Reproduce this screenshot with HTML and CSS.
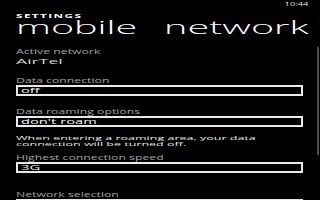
FILE: index.html
```html
<!DOCTYPE html>
<html>
<head>
<meta charset="utf-8">
<link rel="stylesheet" href="styles.css">
</head>
<body>
<div class="screen">
  <div class="status"><span class="time">10:44</span></div>
  <div class="header">
    <div class="app-title">SETTINGS</div>
    <div class="page-title">mobile network</div>
  </div>
  <div class="content">
    <div class="field f-active">
      <div class="label">Active network</div>
      <div class="value">AirTel</div>
    </div>
    <div class="field f-data">
      <div class="label">Data connection</div>
      <div class="picker"><span class="pick-text">off</span></div>
    </div>
    <div class="field f-roam">
      <div class="label">Data roaming options</div>
      <div class="picker"><span class="pick-text">don't roam</span></div>
      <div class="note"><div class="note-line">When entering a roaming area, your data</div><div class="note-line">connection will be turned off.</div></div>
    </div>
    <div class="field f-speed">
      <div class="label">Highest connection speed</div>
      <div class="picker"><span class="pick-text">3G</span></div>
    </div>
    <div class="field f-net">
      <div class="label">Network selection</div>
      <div class="picker"></div>
    </div>
  </div>
  <div class="scrollbar"></div>
</div>
</body>
</html>
```
FILE: styles.css
```css
html, body {
  margin: 0;
  padding: 0;
  background: #000;
}
.screen {
  position: relative;
  width: 320px;
  height: 200px;
  overflow: hidden;
  background: #000;
  color: #fff;
  font-family: "Open Sans", "DejaVu Sans", sans-serif;
}
.status {
  display: flex;
  justify-content: flex-end;
  height: 10px;
  padding-right: 12px;
}
.time {
  display: inline-block;
  font-size: 6px;
  line-height: 8px;
  color: #e0e0e0;
  transform: scaleX(1.55);
  transform-origin: right top;
}
.header {
  padding-left: 16px;
}
.app-title {
  font-size: 5px;
  font-weight: 700;
  letter-spacing: 0.6px;
  line-height: 6px;
  margin-top: 3px;
  transform: scaleX(2.35);
  transform-origin: left top;
}
.page-title {
  font-size: 19px;
  font-weight: 300;
  line-height: 17px;
  white-space: nowrap;
  margin-top: 0;
  word-spacing: 8px;
  transform: scaleX(2.08);
  transform-origin: left top;
}
.content {
  padding-left: 16px;
  width: 287px;
}
.label, .value, .note-line, .pick-text {
  transform-origin: left top;
  white-space: nowrap;
}
.label {
  font-size: 7px;
  line-height: 9px;
  color: #a0a0a0;
  transform: scaleX(1.75);
}
.value {
  font-size: 8px;
  line-height: 10px;
  color: #d8d8d8;
  transform: scaleX(2.2);
}
.f-active { margin-top: 11px; }
.f-data { margin-top: 10px; }
.f-roam { margin-top: 11px; }
.f-speed { margin-top: 6px; }
.f-net { margin-top: 17px; }
.picker {
  box-sizing: border-box;
  height: 11px;
  border: 2px solid #e8e8e8;
  padding-left: 3px;
  display: flex;
  align-items: center;
}
.pick-text {
  display: inline-block;
  font-size: 7px;
  line-height: 7px;
  color: #f4f4f4;
  transform: scaleX(2.1);
}
.note {
  margin-top: 8px;
  display: flex;
  flex-direction: column;
}
.note-line {
  font-size: 5px;
  line-height: 6px;
  height: 6px;
  color: #e8e8e8;
  transform: scaleX(2.5);
}
.scrollbar {
  position: absolute;
  right: 1px;
  top: 47px;
  width: 2px;
  height: 108px;
  background: #4c4c4c;
}
```
